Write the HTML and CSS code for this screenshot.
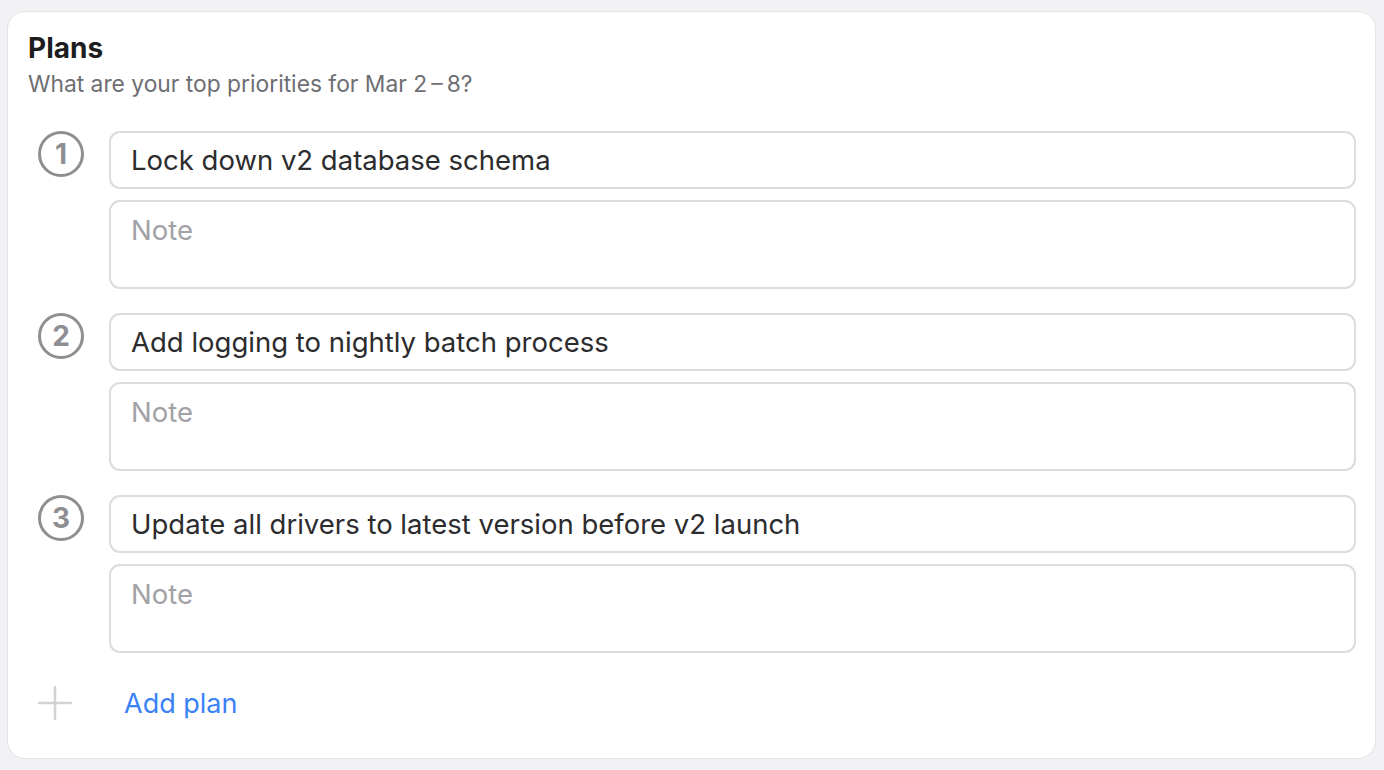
FILE: index.html
```html
<!DOCTYPE html>
<html lang="en">
<head>
  <meta charset="UTF-8">
  <meta name="viewport" content="width=device-width, initial-scale=1.0">
  <title>Plans</title>
  <link rel="stylesheet" href="styles.css">
</head>
<body>
  <div class="card">
    <h2 class="card-title">Plans</h2>
    <p class="card-subtitle">What are your top priorities for Mar 2&thinsp;–&thinsp;8?</p>

    <div class="plan-list">
      <div class="plan">
        <div class="plan-number">1</div>
        <div class="plan-fields">
          <input type="text" class="plan-input" value="Lock down v2 database schema">
          <textarea class="plan-note" placeholder="Note"></textarea>
        </div>
      </div>

      <div class="plan">
        <div class="plan-number">2</div>
        <div class="plan-fields">
          <input type="text" class="plan-input" value="Add logging to nightly batch process">
          <textarea class="plan-note" placeholder="Note"></textarea>
        </div>
      </div>

      <div class="plan">
        <div class="plan-number">3</div>
        <div class="plan-fields">
          <input type="text" class="plan-input" value="Update all drivers to latest version before v2 launch">
          <textarea class="plan-note" placeholder="Note"></textarea>
        </div>
      </div>
    </div>

    <div class="add-row">
      <svg class="add-icon" width="34" height="34" viewBox="0 0 34 34">
        <path d="M17 1v32M1 17h32" stroke="#d1d1d6" stroke-width="2.5" stroke-linecap="round" fill="none"/>
      </svg>
      <a href="#" class="add-link">Add plan</a>
    </div>
  </div>
</body>
</html>
```

FILE: styles.css
```css
* {
  box-sizing: border-box;
}

body {
  font-family: Inter, "Noto Sans", sans-serif;
  color: #2c2c2e;
  margin: 0;
  padding: 11px 8px 12px 7px;
  background-color: #f2f2f5;
}

.card {
  background-color: white;
  border: 1px solid #e3e3e8;
  border-radius: 18px;
  padding: 20px 19px 35px 20px;
}

.card-title {
  margin: 0;
  font-size: 28px;
  line-height: 32px;
  font-weight: 700;
  color: #1d1d1f;
}

.card-subtitle {
  margin: 8px 0 0;
  font-size: 22.8px;
  line-height: 24px;
  color: #6e6e73;
}

.plan-list {
  margin-top: 35px;
  display: flex;
  flex-direction: column;
  gap: 24px;
}

.plan {
  display: flex;
  gap: 25px;
  padding-left: 10px;
}

.plan-number {
  width: 46px;
  height: 46px;
  flex-shrink: 0;
  border: 3.5px solid #8e8e93;
  border-radius: 50%;
  color: #8e8e93;
  font-size: 28px;
  font-weight: 700;
  display: flex;
  align-items: center;
  justify-content: center;
}

.plan-fields {
  flex-grow: 1;
  display: flex;
  flex-direction: column;
  gap: 11px;
}

.plan-input, .plan-note {
  width: 100%;
  border: 2px solid #dcdcdf;
  border-radius: 11px;
  font-family: Inter, "Noto Sans", sans-serif;
  font-size: 27.5px;
  color: #2c2c2e;
  background: white;
  padding: 0 20px;
  outline: none;
}

.plan-input {
  height: 58px;
}

.plan-note {
  height: 89px;
  padding-top: 12px;
  line-height: 32px;
  resize: none;
  display: block;
}

.plan-note::placeholder {
  color: #a1a1a6;
}

.add-row {
  margin-top: 30px;
  height: 40px;
  padding-left: 10px;
  display: flex;
  align-items: center;
  gap: 52px;
}

.add-link {
  font-size: 27px;
  color: #3a82f7;
  text-decoration: none;
}
```
